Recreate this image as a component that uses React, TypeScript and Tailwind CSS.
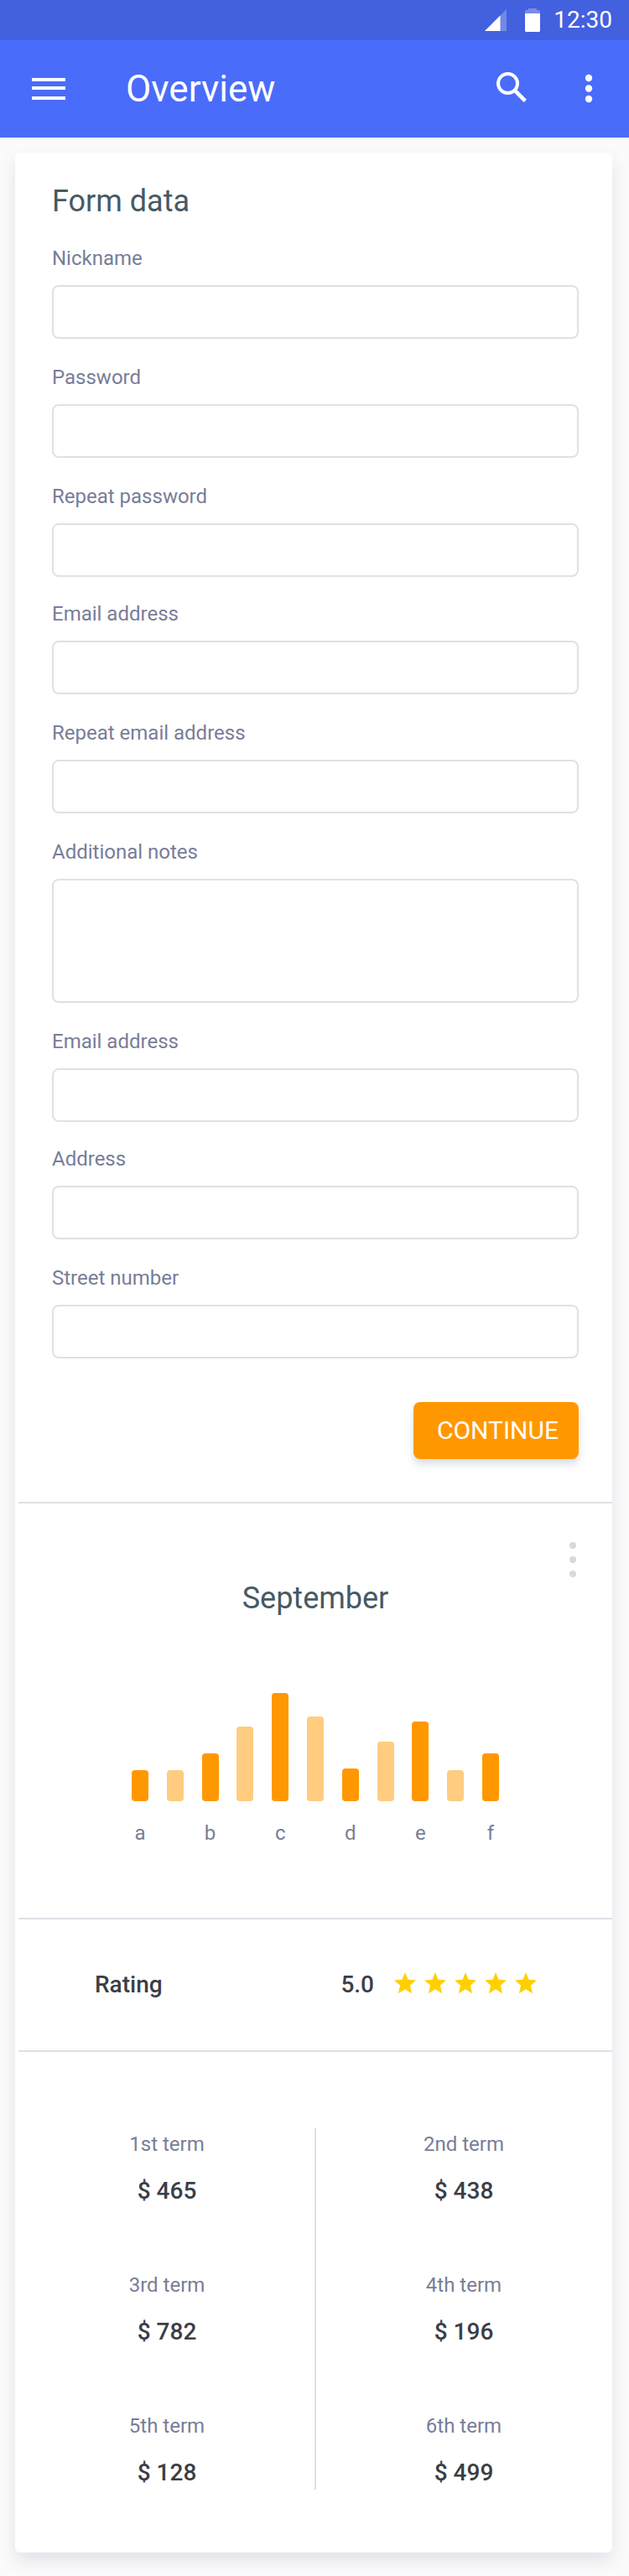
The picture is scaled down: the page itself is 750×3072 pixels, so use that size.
import React from "react";

type FieldDef = { id: string; label: string; type?: string; multiline?: boolean };

const fieldGroups: FieldDef[][] = [
  [
    { id: "nickname", label: "Nickname" },
    { id: "password", label: "Password", type: "password" },
    { id: "repeat-password", label: "Repeat password", type: "password" },
  ],
  [
    { id: "email", label: "Email address", type: "email" },
    { id: "repeat-email", label: "Repeat email address", type: "email" },
    { id: "notes", label: "Additional notes", multiline: true },
    { id: "contact-email", label: "Email address", type: "email" },
  ],
  [
    { id: "address", label: "Address" },
    { id: "street-number", label: "Street number" },
  ],
];

const bars = [37, 37, 57, 89, 129, 101, 39, 71, 95, 37, 57];
const barLabels = ["a", "b", "c", "d", "e", "f"];

const terms = [
  { label: "1st term", value: "$ 465" },
  { label: "2nd term", value: "$ 438" },
  { label: "3rd term", value: "$ 782" },
  { label: "4th term", value: "$ 196" },
  { label: "5th term", value: "$ 128" },
  { label: "6th term", value: "$ 499" },
];

function StatusBar() {
  return (
    <div className="flex h-12 items-center justify-end bg-[#4360df] pr-5 text-white">
      <svg className="h-[26px] w-[26px]" viewBox="0 0 26 26" aria-hidden="true">
        <path d="M26 0V26H0Z" fill="#fff" opacity=".25" />
        <path d="M18.5 7.5V26H0Z" fill="#fff" />
      </svg>
      <svg className="ml-[22px] h-7 w-[18px]" viewBox="0 0 18 28" aria-hidden="true">
        <path d="M4 0H14V2H16.500A1.500 1.500 0 0 1 18 3.500V6H0V3.500A1.500 1.500 0 0 1 1.500 2H4Z" fill="#fff" opacity=".28" />
        <path d="M0 6H18V26.500A1.500 1.500 0 0 1 16.500 28H1.500A1.500 1.500 0 0 1 0 26.500Z" fill="#fff" />
      </svg>
      <span className="ml-4 text-[28px] leading-8">12:30</span>
    </div>
  );
}

function AppBar() {
  return (
    <header className="flex h-[116px] items-center bg-[#4a6cfa] pr-11 pl-[38px] text-white">
      <button type="button" aria-label="Menu" className="flex h-10 w-10 items-center">
        <svg className="h-[26px] w-10" viewBox="0 0 40 26" fill="currentColor">
          <path d="M0 0H40V4H0ZM0 10H40V14H0ZM0 22H40V26H0Z" />
        </svg>
      </button>
      <h1 className="ml-[72px] flex-1 text-[44px] leading-[52px]">Overview</h1>
      <button type="button" aria-label="Search" className="flex h-10 w-9 items-start">
        <svg className="h-9 w-9" viewBox="0 0 36 36" fill="none" stroke="currentColor">
          <circle cx="13.500" cy="13.500" r="11.500" strokeWidth="4" />
          <path d="M21.500 21.500L34.300 34.300" strokeWidth="4.600" />
        </svg>
      </button>
      <button type="button" aria-label="More options" className="ml-[70px] flex h-10 w-2 items-center">
        <svg className="h-[34px] w-2 shrink-0 overflow-visible" viewBox="0 0 8 34" fill="currentColor">
          <circle cx="4" cy="4" r="4.200" />
          <circle cx="4" cy="16.500" r="4.200" />
          <circle cx="4" cy="29" r="4.200" />
        </svg>
      </button>
    </header>
  );
}

function Field({ id, label, type = "text", multiline }: FieldDef) {
  const box =
    "block w-full rounded-lg border-2 border-[#dfe1e8] bg-white px-4 text-2xl text-[#3b3e46] outline-none focus:border-[#4a6cfa]";
  return (
    <div>
      <label htmlFor={id} className="mb-[18px] block text-2xl leading-7 text-[#787d98]">
        {label}
      </label>
      {multiline ? (
        <textarea id={id} className={`${box} h-[148px] resize-none py-3`} />
      ) : (
        <input id={id} type={type} className={`${box} h-16`} />
      )}
    </div>
  );
}

function FormSection() {
  return (
    <form className="pt-[37px] pr-10 pb-[51px] pl-11" onSubmit={(e) => e.preventDefault()}>
      <h2 className="mb-[33px] text-4xl leading-[42px] text-[#455a64]">Form data</h2>
      <div className="flex flex-col gap-[30px]">
        {fieldGroups.map((group, i) => (
          <div key={i} className="flex flex-col gap-8">
            {group.map((field) => (
              <Field key={field.id} {...field} />
            ))}
          </div>
        ))}
      </div>
      <div className="mt-[52px] flex justify-end">
        <button
          type="submit"
          className="h-[68px] rounded-lg bg-[#ff9800] pr-6 pl-7 text-3xl text-white shadow-[0_6px_10px_rgba(69,90,120,0.2)]"
        >
          CONTINUE
        </button>
      </div>
    </form>
  );
}

function ChartSection() {
  return (
    <section className="relative pt-[92px] pb-[87px]">
      <button type="button" aria-label="Chart options" className="absolute top-[46px] right-[43px] text-[#d8d9dd]">
        <svg className="h-[42px] w-2" viewBox="0 0 8 42" fill="currentColor">
          <circle cx="4" cy="4" r="4" />
          <circle cx="4" cy="21" r="4" />
          <circle cx="4" cy="38" r="4" />
        </svg>
      </button>
      <h2 className="text-center text-4xl leading-[42px] text-[#455a64]">September</h2>
      <div className="mx-auto mt-[92px] w-[438px]">
        <div className="flex items-end justify-between">
          {bars.map((height, i) => (
            <div
              key={i}
              className={`w-5 rounded ${i % 2 === 0 ? "bg-[#ff9800]" : "bg-[#ffcc80]"}`}
              style={{ height }}
            />
          ))}
        </div>
        <div className="mt-6 flex justify-between text-center text-2xl leading-7 text-[#787d98]">
          {barLabels.map((label) => (
            <span key={label} className="w-5">
              {label}
            </span>
          ))}
        </div>
      </div>
    </section>
  );
}

function Star() {
  return (
    <svg className="h-[30px] w-[26px]" viewBox="0 0 26 30" fill="#ffd000" aria-hidden="true">
      <path d="M13 0L16.500 8.800L26 9.600L18.900 15.800L21.100 25.200L13 20.300L4.900 25.200L7.100 15.800L0 9.600L9.500 8.800Z" />
    </svg>
  );
}

function RatingSection() {
  return (
    <section className="flex h-[156px] items-center pr-[90px] pl-[91px] text-[28px] leading-8 font-medium text-[#3b3e46]">
      <h2 className="flex-1">Rating</h2>
      <span>5.0</span>
      <div className="ml-6 flex gap-2.5" role="img" aria-label="5 out of 5 stars">
        {[1, 2, 3, 4, 5].map((n) => (
          <Star key={n} />
        ))}
      </div>
    </section>
  );
}

function TermsSection() {
  return (
    <section className="pt-[91px] pb-[75px]">
      <dl className="relative grid grid-cols-2 gap-y-[78px] pt-[5px] text-center">
        <div className="absolute inset-y-0 left-1/2 w-0.5 -translate-x-1/2 bg-[#dfe1e8]" />
        {terms.map((term) => (
          <div key={term.label}>
            <dt className="text-2xl leading-7 text-[#787d98]">{term.label}</dt>
            <dd className="mt-[22px] text-[28px] leading-10 font-medium text-[#3b3e46]">{term.value}</dd>
          </div>
        ))}
      </dl>
    </section>
  );
}

function Divider() {
  return <hr className="h-0.5 border-0 bg-[#dfe1e8]" />;
}

export default function App() {
  return (
    <div className="min-h-screen bg-[#fbfbfb] font-['Roboto',sans-serif]">
      <StatusBar />
      <AppBar />
      <main className="pt-[18px] pr-5 pb-7 pl-[18px]">
        <div className="rounded-md bg-white shadow-[0_10px_20px_rgba(69,90,120,0.15)]">
          <FormSection />
          <div className="pl-1">
            <Divider />
            <ChartSection />
            <Divider />
            <RatingSection />
            <Divider />
            <TermsSection />
          </div>
        </div>
      </main>
    </div>
  );
}
